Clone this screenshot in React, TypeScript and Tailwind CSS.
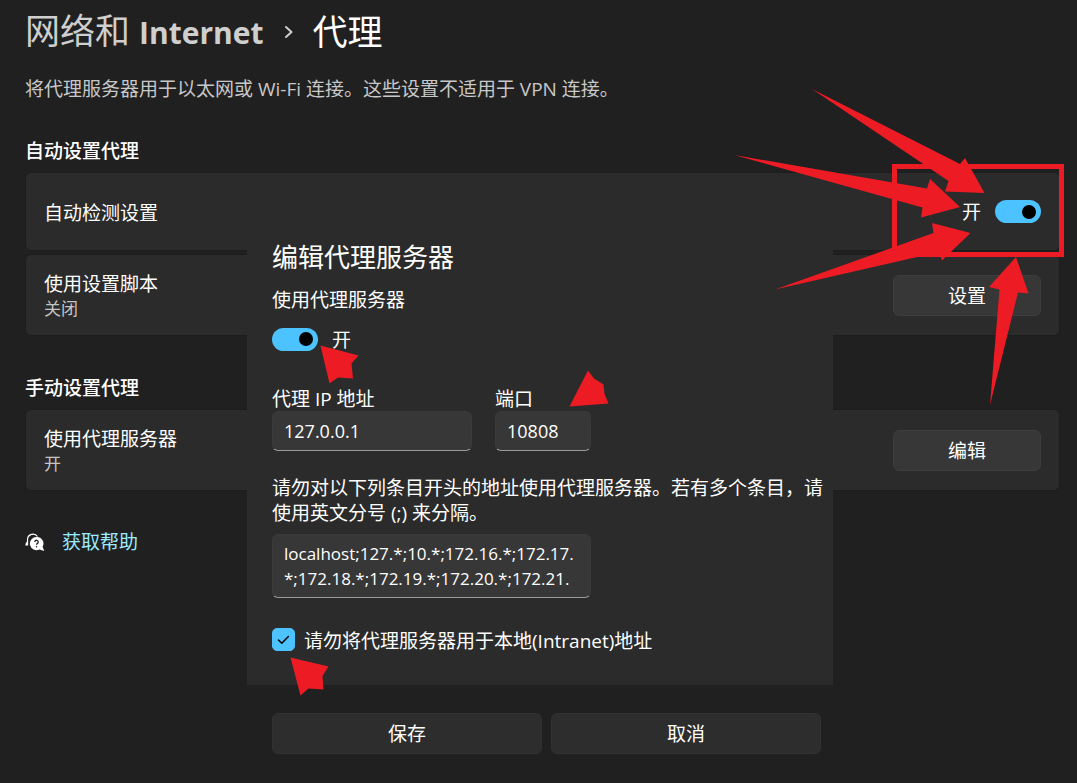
import React, { useState } from "react";

function Toggle({ id, label }: { id: string; label: string }) {
  const [on, setOn] = useState(true);
  return (
    <input
      id={id}
      type="checkbox"
      role="switch"
      aria-label={label}
      checked={on}
      onChange={() => setOn(!on)}
      className="flex h-[23px] w-[46px] shrink-0 appearance-none items-center rounded-full bg-[#5f5f5f] px-[5px] before:size-[14px] before:rounded-full before:bg-black before:content-[''] checked:justify-end checked:bg-[#4cc2ff]"
    />
  );
}

function Card({
  title,
  detail,
  children,
}: {
  title: string;
  detail?: string;
  children: React.ReactNode;
}) {
  return (
    <div className="flex items-center justify-between rounded-md border border-[#1d1d1d] bg-[#2b2b2b] px-[18px] py-[14px]">
      <div className="pt-[2px]">
        <div className="leading-[26px]">{title}</div>
        {detail && <div className="text-[17px] leading-6 text-[#c5c5c5]">{detail}</div>}
      </div>
      {children}
    </div>
  );
}

function CardButton({ children }: { children: React.ReactNode }) {
  return (
    <button
      type="button"
      className="h-[41px] w-[148px] rounded-md border border-[#3d3d3d] bg-[#373737] pt-[2px]"
    >
      {children}
    </button>
  );
}

const fieldClass =
  "block w-full rounded-md border border-[#3a3a3a] border-b-[#9a9a9a] bg-[#373737] px-[11px] text-white outline-none";

function EditProxyDialog() {
  const [local, setLocal] = useState(true);
  return (
    <section
      role="dialog"
      aria-labelledby="dialog-title"
      className="absolute top-[232px] left-[247px] w-[586px] bg-[#202020]"
    >
      <div className="bg-[#2b2b2b] pt-2 pr-2 pb-8 pl-[25px]">
        <h2 id="dialog-title" className="text-[26px] leading-[34px]">
          编辑代理服务器
        </h2>
        <label htmlFor="use-proxy" className="mt-[13px] block leading-[26px]">
          使用代理服务器
        </label>
        <div className="mt-3 flex items-center gap-[14px]">
          <Toggle id="use-proxy" label="使用代理服务器" />
          <span className="pt-[2px] leading-[26px]">开</span>
        </div>
        <div className="mt-[34px] flex gap-[23px]">
          <div className="w-[200px]">
            <label htmlFor="ip" className="block leading-6">
              代理 IP 地址
            </label>
            <input id="ip" defaultValue="127.0.0.1" className={`${fieldClass} h-10 text-[18px]`} />
          </div>
          <div className="w-24">
            <label htmlFor="port" className="block leading-6">
              端口
            </label>
            <input id="port" defaultValue="10808" className={`${fieldClass} h-10 text-[18px]`} />
          </div>
        </div>
        <label htmlFor="exceptions" className="mt-[25px] block leading-[25px]">
          请勿对以下列条目开头的地址使用代理服务器。若有多个条目，请使用英文分号 (;) 来分隔。
        </label>
        <textarea
          id="exceptions"
          defaultValue={
            "localhost;127.*;10.*;172.16.*;172.17.\n*;172.18.*;172.19.*;172.20.*;172.21."
          }
          className={`${fieldClass} mt-2 h-16 max-w-[319px] resize-none overflow-hidden py-[6px] text-[17px] leading-[25px] whitespace-pre`}
        />
        <div className="mt-7 flex items-center gap-[9px]">
          <span className="grid size-[23px]">
            <input
              id="local"
              type="checkbox"
              checked={local}
              onChange={() => setLocal(!local)}
              className="peer col-start-1 row-start-1 appearance-none rounded-[5px] border border-[#9a9a9a] checked:border-[#4cc2ff] checked:bg-[#4cc2ff]"
            />
            <svg
              viewBox="0 0 23 23"
              fill="none"
              stroke="#000"
              strokeWidth="1.5"
              strokeLinecap="round"
              strokeLinejoin="round"
              className="pointer-events-none invisible col-start-1 row-start-1 size-full peer-checked:visible"
            >
              <path d="M6.5 12l3.3 3.3 6.6-6.8" />
            </svg>
          </span>
          <label htmlFor="local" className="pt-[3px] leading-6">
            请勿将代理服务器用于本地(Intranet)地址
          </label>
        </div>
      </div>
      <div className="flex gap-[9px] pt-7 pr-3 pb-7 pl-[25px]">
        <button type="button" className="h-[41px] flex-1 rounded-md border border-[#313131] bg-[#2d2d2d] pt-[2px]">
          保存
        </button>
        <button type="button" className="h-[41px] flex-1 rounded-md border border-[#313131] bg-[#2d2d2d] pt-[2px]">
          取消
        </button>
      </div>
    </section>
  );
}

function Annotations() {
  return (
    <svg
      width="1077"
      height="783"
      viewBox="0 0 1077 783"
      fill="#ed1c24"
      aria-hidden="true"
      className="pointer-events-none absolute top-0 left-0"
    >
      <rect x="894.5" y="166.5" width="167" height="88" fill="none" stroke="#ed1c24" strokeWidth="5" />
      <path d="M812 89L960 164L965 158L984.500 193L945 191.500L948.500 181Z" />
      <path d="M734 155L927 188.500L930 179L960 207L921 217.500L922.500 207.500Z" />
      <path d="M775 289.500L933.500 233L932 223L970.500 233L942 260.500L939 252Z" />
      <path d="M990 405L999.500 289.500L989 287L1016 257L1028.500 293.500L1018 292.500Z" />
      <path d="M320.500 345.500L358.500 355.500L351.500 363.500L353 378.500L338 377.500L329.500 383.500Z" />
      <path d="M588 370.500L594 378.500L603.500 384.500L604.500 394L608.500 403.500L569.500 406.500Z" />
      <path d="M290.500 657.500L328.500 666.500L322.500 676L323.500 689.500L308.500 688.500L300.500 695.500Z" />
    </svg>
  );
}

export default function App() {
  return (
    <div className="relative min-h-screen bg-[#202020] pt-[7px] pr-[17px] pl-[25px] font-['Open_Sans','Noto_Sans_CJK_SC',sans-serif] text-[19px] text-white">
      <h1 className="flex items-center text-[35px] leading-[48px]">
        <a href="#network" className="text-[#cfcfcf]">
          网络和 <span className="text-[30px] font-bold">Internet</span>
        </a>
        <svg
          viewBox="0 0 10 14"
          fill="none"
          stroke="#cfcfcf"
          strokeWidth="2"
          strokeLinecap="round"
          strokeLinejoin="round"
          className="mr-[19px] ml-5 h-[14px] w-[10px]"
        >
          <path d="M2 2l5.500 5L2 12" />
        </svg>
        <span>代理</span>
      </h1>
      <p className="mt-[18px] leading-7 text-[#c8c8c8]">
        将代理服务器用于以太网或 Wi-Fi 连接。这些设置不适用于 VPN 连接。
      </p>

      <h2 className="mt-[34px] leading-7 font-medium">自动设置代理</h2>
      <div className="mt-[7px] flex flex-col gap-[3px]">
        <Card title="自动检测设置">
          <div className="flex h-[49px] items-center gap-[14px]">
            <span className="pt-[2px]">开</span>
            <Toggle id="auto-detect" label="自动检测设置" />
          </div>
        </Card>
        <Card title="使用设置脚本" detail="关闭">
          <CardButton>设置</CardButton>
        </Card>
      </div>

      <h2 className="mt-[38px] leading-7 font-medium">手动设置代理</h2>
      <div className="mt-[7px]">
        <Card title="使用代理服务器" detail="开">
          <CardButton>编辑</CardButton>
        </Card>
      </div>

      <a href="#help" className="mt-[37px] inline-flex items-center gap-[17px] leading-7 text-[#99ebff]">
        <svg viewBox="0 0 20 20" fill="none" className="size-5">
          <path d="M2.500 10V7.500A5.500 5.500 0 0 1 12.500 4.500" stroke="#fff" strokeWidth="1.200" />
          <path d="M3.100 8.500v5H.300l.5-2.500Z" fill="#fff" />
          <path
            d="M11.500 5a6.600 6.600 0 1 0 2.900 12.500l4.900 1.600-1.700-4.300A6.600 6.600 0 0 0 11.500 5Z"
            fill="#fff"
          />
          <path d="M9.800 10a1.700 1.700 0 1 1 2.600 1.400c-.6.400-.9.700-.9 1.400" stroke="#202020" strokeWidth="1.300" />
          <circle cx="11.500" cy="14.700" r=".8" fill="#202020" />
        </svg>
        获取帮助
      </a>

      <EditProxyDialog />
      <Annotations />
    </div>
  );
}
